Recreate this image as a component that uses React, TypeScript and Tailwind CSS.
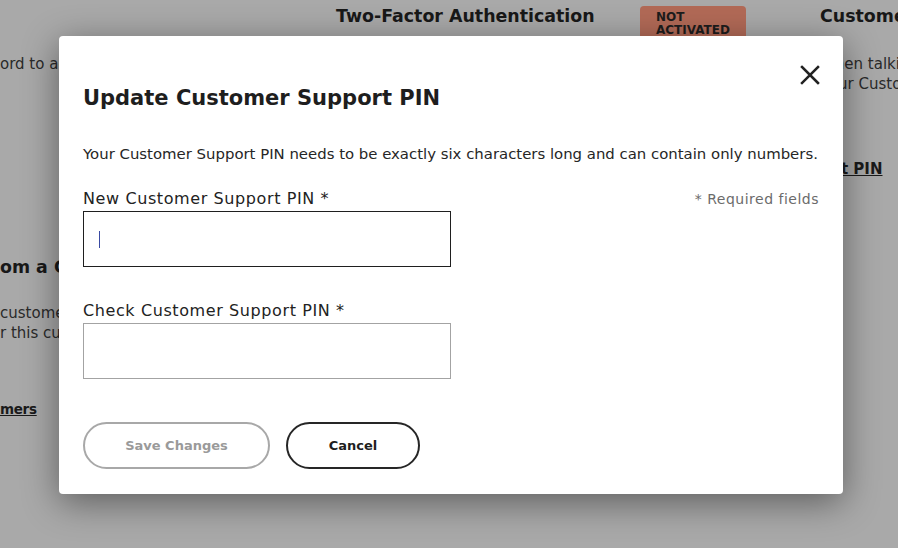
const font = { fontFamily: '"DejaVu Sans", "Open Sans", sans-serif' };

function PinField({ label, focused }: { label: string; focused?: boolean }) {
  return (
    <div className="flex flex-col">
      <label className="pt-[1px] text-[16px] leading-[22px] text-[#222] tracking-[0.6px]">{label}</label>
      <div
        className={
          'mt-[1px] w-[368px] h-[56px] flex items-center px-[15px] bg-white border ' +
          (focused ? 'border-[#1f1f1f]' : 'border-[#a3a3a3]')
        }
      >
        {focused && <span className="block w-px h-[17px] bg-[#3a4aa3]" />}
      </div>
    </div>
  );
}

function CloseIcon() {
  return (
    <svg width="20" height="20" viewBox="0 0 20 20" fill="none" stroke="#222" strokeWidth="2.5" strokeLinecap="square">
      <path d="M2 2 L18 18 M18 2 L2 18" />
    </svg>
  );
}

export default function App() {
  return (
    <div className="relative w-[898px] h-[548px] overflow-hidden bg-[#a9a9a9]" style={font}>
      {/* page behind the overlay */}
      <div className="flex flex-col text-[#181818]">
        <div className="grid grid-cols-[336px_484px_1fr] h-[255px]">
          <div className="pt-[54px] text-[15px] leading-[20px] text-[#2a2a2a] whitespace-nowrap">
            ord to access your account
          </div>
          <div className="flex items-start pt-[4px]">
            <h2 className="w-[304px] text-[17.4px] leading-[24px] font-bold whitespace-nowrap">Two-Factor Authentication</h2>
            <span className="mt-[2px] w-[106px] rounded-[4px] bg-[#b26a57] px-[16px] py-[5px] text-[12px] leading-[13px] font-bold text-[#1c1c1c]">
              NOT
              <br />
              ACTIVATED
            </span>
          </div>
          <div className="pt-[4px] whitespace-nowrap">
            <h2 className="text-[17.4px] leading-[24px] font-bold">Customer Support PIN</h2>
            <p className="mt-[26px] text-[15px] leading-[20px] text-[#2a2a2a]">
              When talking to us,
              <br />
              your Customer Support PIN
            </p>
            <a className="block mt-[64px] text-[15px] font-bold underline text-[#1a1a1a]">Set PIN</a>
          </div>
        </div>
        <div className="whitespace-nowrap">
          <h2 className="text-[17.4px] leading-[24px] font-bold">om a Customer</h2>
          <p className="mt-[24px] text-[15px] leading-[20px] text-[#2a2a2a]">
            customers
            <br />
            r this customer
          </p>
          <a className="block mt-[56px] text-[13.5px] font-bold underline text-[#1a1a1a] tracking-[-0.3px]">mers</a>
        </div>
      </div>

      {/* modal */}
      <div className="absolute left-[59px] top-[36px] w-[784px] h-[458px] rounded-[4px] bg-white shadow-[0_8px_36px_rgba(0,0,0,0.45)] px-[24px] pt-[29px]">
        <div className="flex justify-end -mr-[1px]">
          <button className="w-5 h-5 flex items-center justify-center">
            <CloseIcon />
          </button>
        </div>
        <h1 className="-mt-[1px] text-[21px] leading-[28px] font-bold text-[#1e1e1e]">Update Customer Support PIN</h1>
        <p className="mt-[31px] text-[14.9px] leading-[22px] text-[#262626] whitespace-nowrap">
          Your Customer Support PIN needs to be exactly six characters long and can contain only numbers.
        </p>
        <div className="mt-[22px] flex justify-between items-start">
          <PinField label="New Customer Support PIN *" focused />
          <span className="pt-[1px] text-[14px] leading-[22px] text-[#6b6b6b] tracking-[0.5px]">* Required fields</span>
        </div>
        <div className="mt-[32px]">
          <PinField label="Check Customer Support PIN *" />
        </div>
        <div className="mt-[43px] flex gap-[16px]">
          <button className="w-[187px] h-[47px] rounded-full border-2 border-[#a8a8a8] text-[13px] font-bold text-[#9a9a9a]">
            Save Changes
          </button>
          <button className="w-[134px] h-[47px] rounded-full border-2 border-[#262626] text-[13px] font-bold text-[#1e1e1e]">
            Cancel
          </button>
        </div>
      </div>
    </div>
  );
}
